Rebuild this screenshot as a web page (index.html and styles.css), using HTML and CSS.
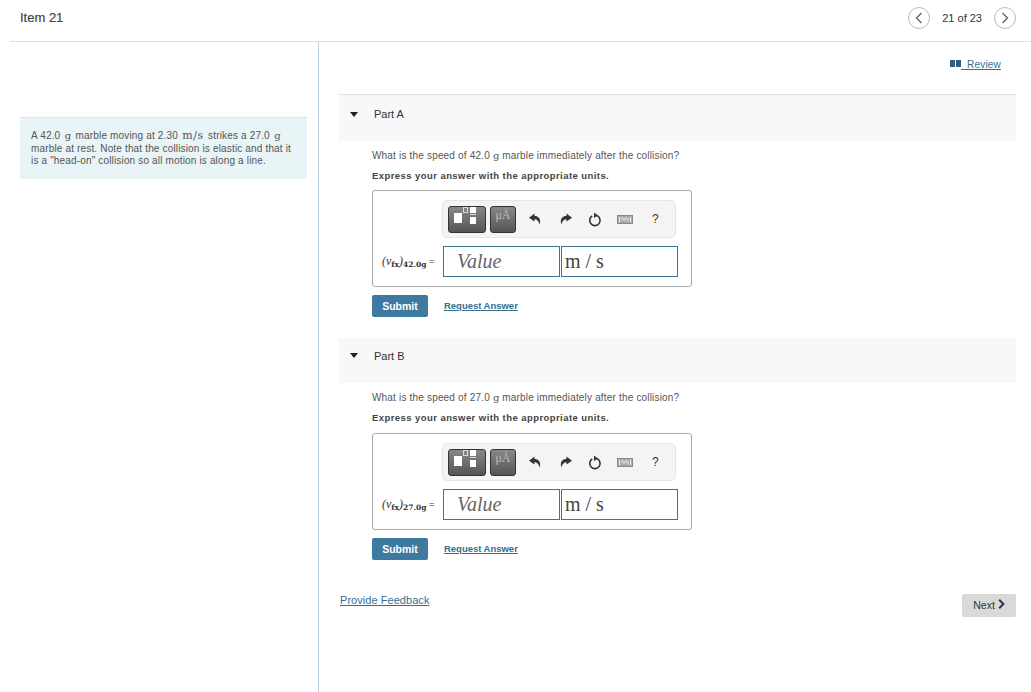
FILE: index.html
```html
<!DOCTYPE html>
<html>
  <head>
    <link rel="stylesheet" href="styles.css">
  </head>
  <body>
    <header class="top">
      <h1>Item 21</h1>
      <nav class="pager">
        <span class="circle"><svg width="8" height="12" viewBox="0 0 8 12"><path d="M6.5 1 L1.5 6 L6.5 11" fill="none" stroke="#666" stroke-width="1.4"/></svg></span>
        <span class="count">21 of 23</span>
        <span class="circle"><svg width="8" height="12" viewBox="0 0 8 12"><path d="M1.5 1 L6.5 6 L1.5 11" fill="none" stroke="#666" stroke-width="1.4"/></svg></span>
      </nav>
    </header>
    <div class="page">
      <aside class="left">
        <div class="intro">
          A 42.0 <span class="m">g</span> marble moving at 2.30 <span class="m mu">m/s</span> strikes a 27.0 <span class="m">g</span> marble at rest. Note that the collision is elastic and that it is a "head-on" collision so all motion is along a line.
        </div>
      </aside>
      <main class="right">
        <div class="review-row">
          <a class="review" href="#"><svg width="11" height="7" viewBox="0 0 11 7"><rect width="5" height="7" fill="#2f5f7c"/><rect x="6" width="5" height="7" fill="#2f5f7c"/></svg><u>&nbsp;&nbsp;Review</u></a>
        </div>

        <section class="part part-a">
          <div class="part-head"><i class="arrow"></i><span>Part A</span></div>
          <div class="part-body">
            <p class="q">What is the speed of 42.0 <span class="m">g</span> marble immediately after the collision?</p>
            <p class="ask">Express your answer with the appropriate units.</p>
            <div class="answer">
              <div class="toolbar">
                <span class="tool tool-wide"><svg width="36" height="25" viewBox="0 0 36 25"><rect x="5" y="6" width="8" height="10" fill="#fff"/><rect x="14.5" y="0.5" width="4" height="5" fill="none" stroke="#ddd"/><rect x="21" y="0" width="6" height="6" fill="#fff"/><rect x="21" y="7" width="6" height="1" fill="#ddd"/><rect x="21" y="10" width="6" height="7" fill="#fff"/></svg></span>
                <span class="tool tool-unit">μÅ</span>
                <svg class="ico undo" width="12" height="12" viewBox="0 0 12 12"><path d="M5.5 0.5 L0 4.8 L5.5 8.5 V6.2 C8 6.2 9.6 7.6 10.6 11.5 C12.4 6 9.5 3 5.5 3 Z" fill="#333"/></svg>
                <svg class="ico redo" width="12" height="12" viewBox="0 0 12 12"><path d="M6.5 0.5 L12 4.8 L6.5 8.5 V6.2 C4 6.2 2.4 7.6 1.4 11.5 C-0.4 6 2.5 3 6.5 3 Z" fill="#333"/></svg>
                <svg class="ico redraw" width="14" height="15" viewBox="0 0 14 15"><path d="M8.8 3.6 A5.2 5.2 0 1 1 4.2 4" fill="none" stroke="#333" stroke-width="1.6"/><path d="M6 0.5 L10 3.6 L6 6 Z" fill="#333"/></svg>
                <svg class="ico keys" width="16" height="9" viewBox="0 0 16 9"><rect width="16" height="9" fill="#8a8a8a"/><rect x="1" y="1" width="14" height="7" fill="#aaa"/><path d="M2.5 2 V7 M5 2 V5 M7 3 V6 M9 2 V5 M11 3 V6 M13.5 2 V7" stroke="#eee" stroke-width="1"/></svg>
                <span class="help">?</span>
              </div>
              <div class="fields">
                <span class="lbl"><span class="var">(v<sub>fx</sub>)</span><sub>42.0g</sub> =</span>
                <span class="field value">Value</span>
                <span class="field units">m / s</span>
              </div>
            </div>
            <div class="actions">
              <button class="submit">Submit</button>
              <a class="req" href="#">Request Answer</a>
            </div>
          </div>
        </section>

        <section class="part part-b">
          <div class="part-head"><i class="arrow"></i><span>Part B</span></div>
          <div class="part-body">
            <p class="q">What is the speed of 27.0 <span class="m">g</span> marble immediately after the collision?</p>
            <p class="ask">Express your answer with the appropriate units.</p>
            <div class="answer">
              <div class="toolbar">
                <span class="tool tool-wide"><svg width="36" height="25" viewBox="0 0 36 25"><rect x="5" y="6" width="8" height="10" fill="#fff"/><rect x="14.5" y="0.5" width="4" height="5" fill="none" stroke="#ddd"/><rect x="21" y="0" width="6" height="6" fill="#fff"/><rect x="21" y="7" width="6" height="1" fill="#ddd"/><rect x="21" y="10" width="6" height="7" fill="#fff"/></svg></span>
                <span class="tool tool-unit">μÅ</span>
                <svg class="ico undo" width="12" height="12" viewBox="0 0 12 12"><path d="M5.5 0.5 L0 4.8 L5.5 8.5 V6.2 C8 6.2 9.6 7.6 10.6 11.5 C12.4 6 9.5 3 5.5 3 Z" fill="#333"/></svg>
                <svg class="ico redo" width="12" height="12" viewBox="0 0 12 12"><path d="M6.5 0.5 L12 4.8 L6.5 8.5 V6.2 C4 6.2 2.4 7.6 1.4 11.5 C-0.4 6 2.5 3 6.5 3 Z" fill="#333"/></svg>
                <svg class="ico redraw" width="14" height="15" viewBox="0 0 14 15"><path d="M8.8 3.6 A5.2 5.2 0 1 1 4.2 4" fill="none" stroke="#333" stroke-width="1.6"/><path d="M6 0.5 L10 3.6 L6 6 Z" fill="#333"/></svg>
                <svg class="ico keys" width="16" height="9" viewBox="0 0 16 9"><rect width="16" height="9" fill="#8a8a8a"/><rect x="1" y="1" width="14" height="7" fill="#aaa"/><path d="M2.5 2 V7 M5 2 V5 M7 3 V6 M9 2 V5 M11 3 V6 M13.5 2 V7" stroke="#eee" stroke-width="1"/></svg>
                <span class="help">?</span>
              </div>
              <div class="fields">
                <span class="lbl"><span class="var">(v<sub>fx</sub>)</span><sub>27.0g</sub> =</span>
                <span class="field value">Value</span>
                <span class="field units">m / s</span>
              </div>
            </div>
            <div class="actions">
              <button class="submit">Submit</button>
              <a class="req" href="#">Request Answer</a>
            </div>
          </div>
        </section>

        <div class="foot">
          <a class="feedback" href="#">Provide Feedback</a>
          <button class="next">Next <svg width="7" height="10" viewBox="0 0 7 10"><path d="M1.2 0.8 L5.4 5 L1.2 9.2" fill="none" stroke="#333" stroke-width="2"/></svg></button>
        </div>
      </main>
    </div>
  </body>
</html>
```

FILE: styles.css
```css
/* mini reset */
* { margin: 0; padding: 0; box-sizing: border-box; }

html, body { height: 100%; overflow: hidden; }

body {
  background: #fff;
  color: #444;
  font-family: "Liberation Sans", Arial, sans-serif;
  font-size: 9.5px;
}

a { color: #33708f; }

/* top bar */
.top {
  height: 42px;
  margin-left: 10px;
  padding: 0 10px;
  display: flex;
  align-items: center;
  justify-content: space-between;
  border-bottom: 1px solid #e0e0e0;
}
.top h1 { font-size: 13px; font-weight: normal; color: #444; -webkit-text-stroke: 0.2px #444; margin-top: -6px; }

.pager { display: flex; align-items: center; gap: 12px; margin-top: -6px; margin-right: 5px; font-size: 11px; color: #333; }
.circle {
  width: 22px; height: 22px;
  border: 1px solid #bbb;
  border-radius: 50%;
  display: flex;
  align-items: center;
  justify-content: center;
}

/* columns */
.page { display: flex; height: 650px; }

.left { width: 319px; flex: none; padding: 75px 11px 0 20px; border-right: 1px solid #bcd0e2; }
.intro {
  background: #e8f4f6;
  border-top: 1px solid #dde5e8;
  height: 62px;
  padding: 12px 14px 0 11px;
  font-size: 10px;
  line-height: 12.5px;
  letter-spacing: 0.16px;
  color: #555;
}
.m { font-family: "DejaVu Serif", serif; font-size: 10px; letter-spacing: 0; }
.intro .m { margin: 0 1.5px; }
.intro .mu { font-size: 11px; letter-spacing: 0.5px; }

.right { flex: 1; padding: 0 15px 0 20px; }

.review-row { height: 52px; padding-top: 17px; text-align: right; padding-right: 15px; font-size: 10px; }
.review { text-decoration: none; }
.review svg { vertical-align: 1px; }
.review u { letter-spacing: 0.2px; }

/* parts */
.part-head {
  height: 47px;
  background: #f8f8f8;
  border-top: 1px solid #e0e0e0;
  display: flex;
  align-items: center;
  padding: 0 0 8px 11px;
  color: #333;
  font-size: 11px;
}
.part-b .part-head { border-top: 0; height: 45px; padding-bottom: 10px; }
.part-head span { margin-left: 16px; }
.arrow {
  width: 0; height: 0;
  border-left: 4px solid transparent;
  border-right: 4px solid transparent;
  border-top: 5px solid #222;
}

.part-body { padding: 8px 0 0 33px; }
.q { font-size: 10px; line-height: 13px; letter-spacing: 0.18px; color: #555; }
.ask { margin-top: 7px; line-height: 13px; font-weight: bold; letter-spacing: 0.43px; color: #444; }

/* answer box */
.answer {
  width: 320px;
  height: 97px;
  margin-top: 8px;
  border: 1px solid #aaa;
  border-radius: 3px;
  padding: 9px 0 0 9px;
}
.part-b .answer { margin-top: 9px; }
.toolbar {
  width: 234px;
  height: 38px;
  margin-left: 60px;
  background: #f4f4f4;
  border: 1px solid #e6e6e6;
  border-radius: 5px;
  display: flex;
  align-items: center;
  padding: 0 5px;
}
.tool {
  height: 27px;
  background: linear-gradient(#888, #555);
  border: 1px solid #333;
  border-radius: 3px;
  display: flex;
  align-items: center;
  justify-content: center;
  flex: none;
}
.tool-wide { width: 38px; margin-right: 4px; }
.tool-unit { width: 26px; color: #bbb; font-family: "Liberation Serif", serif; font-size: 12px; align-items: flex-start; line-height: 16px; margin-right: 13px; }
.ico { flex: none; }
.undo { margin-right: 19px; }
.redo { margin-right: 16px; }
.redraw { margin-right: 15px; }
.keys { margin-right: 19px; }
.help { font-size: 12px; color: #333; }

.fields { display: flex; align-items: center; margin-top: 8px; }
.lbl { width: 61px; flex: none; font-family: "Liberation Serif", serif; font-size: 10px; white-space: nowrap; color: #333; }
.lbl .var { font-style: italic; font-size: 12px; }
.lbl sub { font-family: "DejaVu Serif", serif; font-style: normal; font-size: 7.5px; line-height: 0; font-weight: bold; vertical-align: -2px; }
.field {
  height: 31px;
  width: 117px;
  flex: none;
  border: 1px solid #3b7699;
  font-family: "Liberation Serif", serif;
  display: flex;
  align-items: center;
  font-size: 20px;
}
.value { font-style: italic; color: #666; padding-left: 13px; margin-right: 1px; }
.units { color: #444; padding-left: 3px; }

/* buttons */
.actions { display: flex; align-items: center; margin-top: 8px; gap: 16px; }
.submit {
  width: 56px; height: 22px;
  background: #3e7aa0;
  border: 0;
  border-radius: 2px;
  color: #fff;
  font-family: inherit;
  font-size: 10.5px;
  font-weight: bold;
}
.req { font-size: 9.5px; font-weight: bold; letter-spacing: -0.02px; color: #33708f; margin-top: -2px; }
.part-a .actions { margin-bottom: 21px; }

.foot { display: flex; justify-content: space-between; align-items: flex-start; margin-top: 34px; }
.feedback { font-size: 11px; letter-spacing: 0.05px; margin-left: 1px; }
.next {
  width: 54px; height: 23px;
  padding-bottom: 1px;
  background: #d9d9d9;
  border: 0;
  border-radius: 2px;
  font-family: inherit;
  font-size: 10.5px;
  color: #333;
}
```
